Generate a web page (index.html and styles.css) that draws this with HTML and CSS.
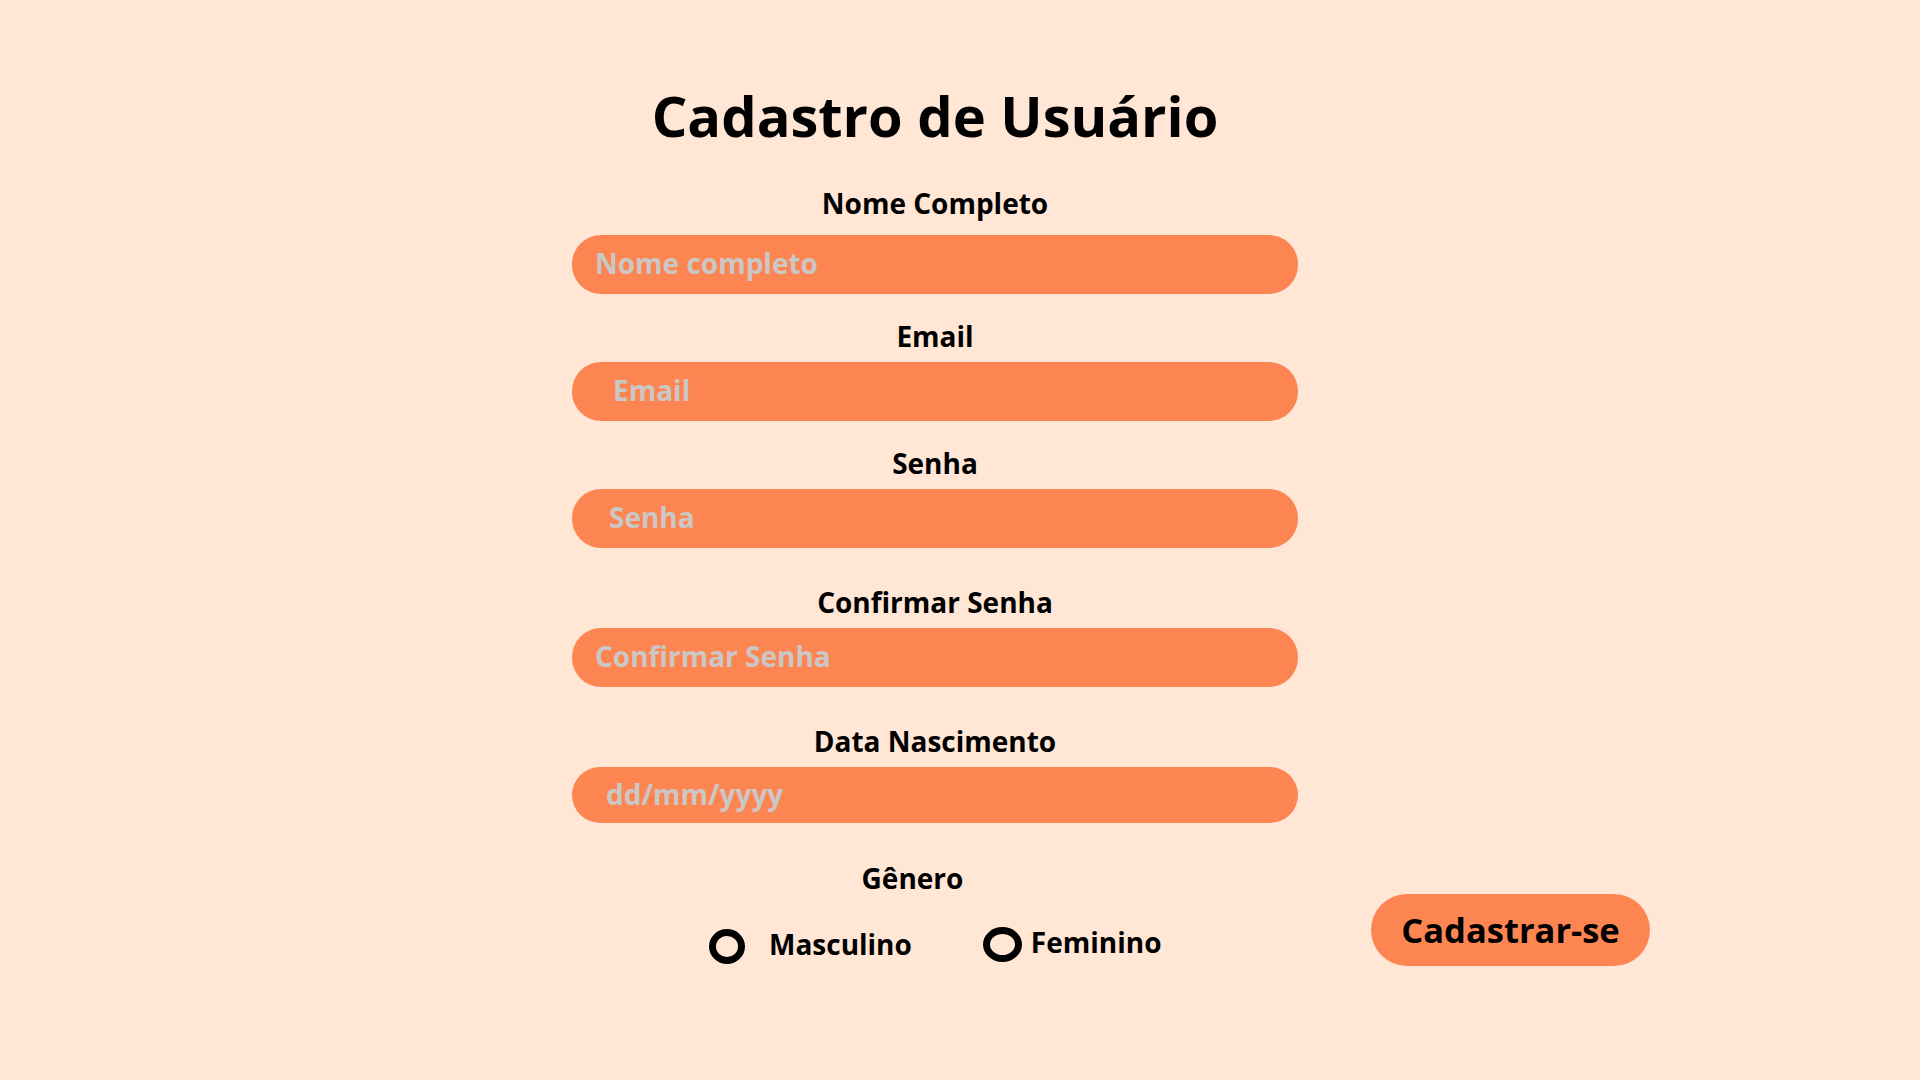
FILE: index.html
```html
<!DOCTYPE html>
<html lang="pt-BR">
<head>
<meta charset="utf-8">
<title>Cadastro de Usuário</title>
<link rel="stylesheet" href="styles.css">
</head>
<body>
<main class="page">
  <h1 class="title">Cadastro de Usuário</h1>
  <form class="form">
    <div class="field field--first">
      <label class="field-label" for="nome">Nome Completo</label>
      <input class="field-input pad-a" id="nome" type="text" placeholder="Nome completo">
    </div>
    <div class="field">
      <label class="field-label" for="email">Email</label>
      <input class="field-input pad-b" id="email" type="email" placeholder="Email">
    </div>
    <div class="field">
      <label class="field-label" for="senha">Senha</label>
      <input class="field-input pad-c" id="senha" type="text" placeholder="Senha">
    </div>
    <div class="field field--wide">
      <label class="field-label" for="confirmar">Confirmar Senha</label>
      <input class="field-input pad-a" id="confirmar" type="text" placeholder="Confirmar Senha">
    </div>
    <div class="field field--wide">
      <label class="field-label" for="nasc">Data Nascimento</label>
      <input class="field-input field-input--short pad-d" id="nasc" type="text" placeholder="dd/mm/yyyy">
    </div>
    <div class="bottom-row">
      <div class="gender">
        <div class="gender-title">Gênero</div>
        <div class="gender-options">
          <label class="option option--m"><input class="radio" type="radio" name="genero"><span>Masculino</span></label>
          <label class="option option--f"><input class="radio radio--wide" type="radio" name="genero"><span>Feminino</span></label>
        </div>
      </div>
      <button class="submit" type="button">Cadastrar-se</button>
    </div>
  </form>
</main>
</body>
</html>
```
FILE: styles.css
```css
* { box-sizing: border-box; }

html, body {
  margin: 0;
  padding: 0;
}

body {
  background: #ffe6d5;
  font-family: "Open Sans", "Noto Sans", sans-serif;
  color: #000;
  min-height: 1080px;
}

.page {
  width: 726px;
  margin-left: 572px;
}

.title {
  margin: 87px 0 0;
  font-size: 56px;
  line-height: 56px;
  font-weight: 700;
  text-align: center;
}

.form {
  display: flex;
  flex-direction: column;
  margin-top: 41px;
}

.field {
  display: flex;
  flex-direction: column;
  margin-top: 23px;
}

.field--first { margin-top: 0; }
.field--wide { margin-top: 35px; }

.field-label {
  display: block;
  font-size: 28px;
  line-height: 38px;
  font-weight: 700;
  text-align: center;
  margin-bottom: 7px;
}

.field--first .field-label { margin-bottom: 13px; }

.field-input {
  display: block;
  width: 726px;
  height: 59px;
  border: none;
  outline: none;
  border-radius: 29px;
  background: #fc8552;
  font-family: "Open Sans", "Noto Sans", sans-serif;
  font-size: 28px;
  font-weight: 700;
  color: #222;
  padding: 0 20px 3px;
  margin: 0;
}

.field-input--short { height: 56px; border-radius: 28px; }

.field-input::placeholder {
  color: #cbc7c5;
  opacity: 1;
}

.pad-a { padding-left: 23px; }
.pad-b { padding-left: 41px; }
.pad-c { padding-left: 37px; }
.pad-d { padding-left: 34px; }

.bottom-row {
  display: flex;
  align-items: flex-start;
  margin-top: 36px;
  width: 1100px;
}

.gender {
  width: 726px;
  flex: none;
}

.gender-title {
  font-size: 28px;
  line-height: 38px;
  font-weight: 700;
  text-align: center;
  padding-right: 45px;
}

.gender-options {
  display: flex;
  align-items: flex-start;
  padding-left: 137px;
  margin-top: 28px;
}

.option {
  display: flex;
  align-items: flex-start;
  font-size: 28px;
  line-height: 38px;
  font-weight: 700;
  cursor: pointer;
}

.option--m span { margin-left: 24px; }
.option--f { margin-left: 71px; margin-top: -2px; }
.option--f span { margin-left: 9px; }

.radio {
  appearance: none;
  -webkit-appearance: none;
  width: 36px;
  height: 35px;
  margin: 4px 0 0;
  border: 7px solid #000;
  border-radius: 50%;
  background: transparent;
  flex: none;
}

.radio--wide { width: 39px; }

.submit {
  flex: none;
  width: 279px;
  height: 72px;
  margin: 35px 0 0 73px;
  border: none;
  border-radius: 36px;
  background: #fc8552;
  font-family: "Open Sans", "Noto Sans", sans-serif;
  font-size: 34.5px;
  font-weight: 700;
  color: #000;
  padding: 0 0 2px;
  cursor: pointer;
}
```
